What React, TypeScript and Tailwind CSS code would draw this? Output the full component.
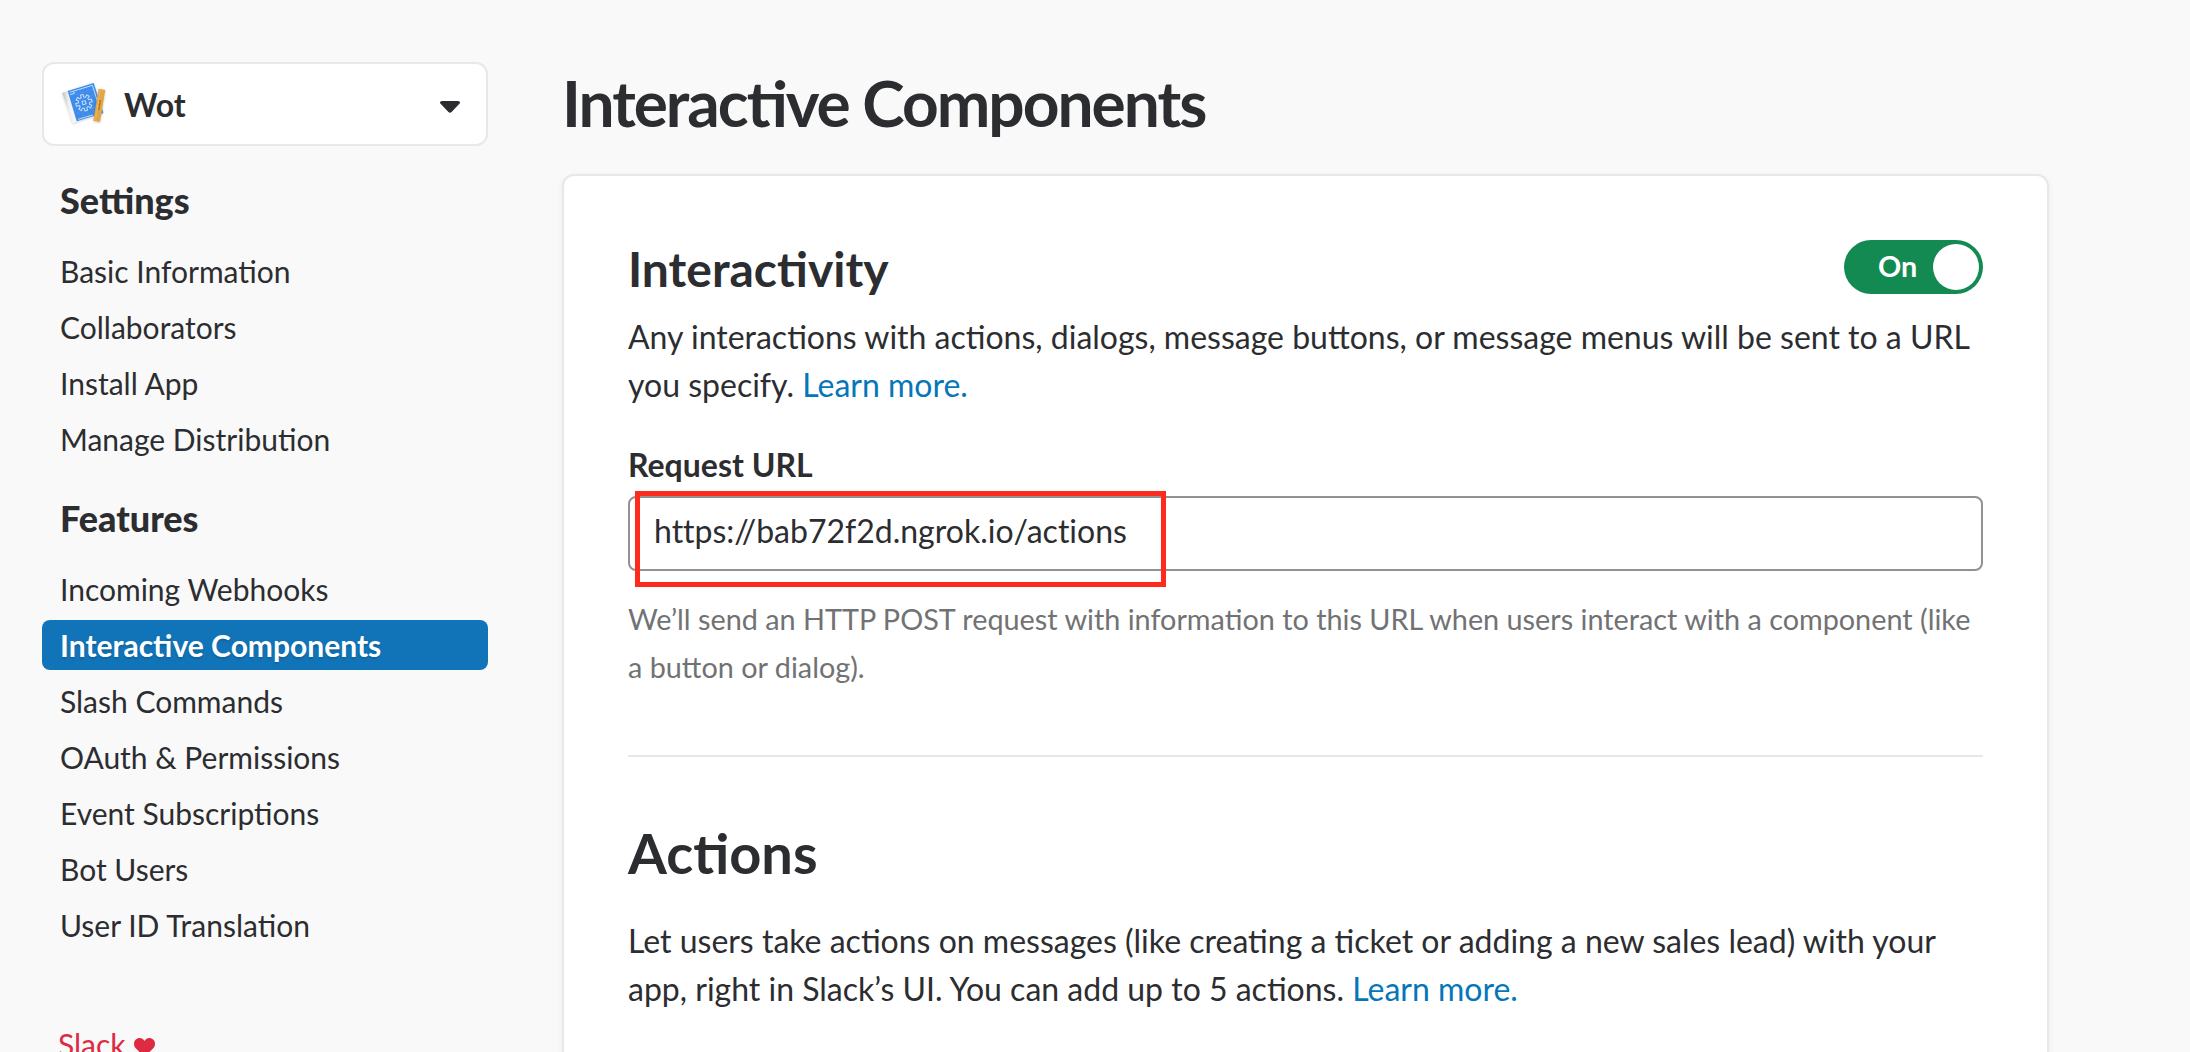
const settings = ['Basic Information', 'Collaborators', 'Install App', 'Manage Distribution'];

const features = [
  'Incoming Webhooks',
  'Interactive Components',
  'Slash Commands',
  'OAuth & Permissions',
  'Event Subscriptions',
  'Bot Users',
  'User ID Translation',
];

// Outline of an eight-toothed gear centred on the origin.
const gearPoints = Array.from({ length: 8 }, (_, i) => i * 45)
  .flatMap((a) => [
    [a - 13, 17],
    [a - 10, 25],
    [a + 10, 25],
    [a + 13, 17],
  ])
  .map(([deg, r]) => {
    const t = (deg * Math.PI) / 180;
    return `${(Math.cos(t) * r).toFixed(1)},${(Math.sin(t) * r).toFixed(1)}`;
  })
  .join(' ');

function BlueprintIcon() {
  return (
    <svg viewBox="0 0 210 210" className="h-[70px] w-[70px] shrink-0" aria-hidden="true">
      <defs>
        <linearGradient id="spine" x1="0" x2="1" y1="0.2" y2="0">
          <stop offset="0" stopColor="#b9b9b9" />
          <stop offset="0.35" stopColor="#f0f0f0" />
          <stop offset="1" stopColor="#ffffff" />
        </linearGradient>
        <filter id="soft" x="-20%" y="-20%" width="140%" height="140%">
          <feDropShadow dx="0" dy="2" stdDeviation="3" floodOpacity="0.25" />
        </filter>
      </defs>
      <g filter="url(#soft)">
        <path d="M37 72 L54 66 L84 157 L69 162 Z" fill="url(#spine)" />
        <path d="M53 66 L131 42 L160 132 L80 157 Z" fill="#3e8bea" />
      </g>
      <g fill="none" stroke="#5b9cf0" strokeWidth="1.2">
        <path d="M75 60 L102 150 M91 55 L118 145 M107 50 L134 140 M58 82 L136 58 M63 99 L141 75 M68 117 L146 93 M74 134 L152 110" />
      </g>
      <g fill="none" stroke="#cfe3fc" strokeWidth="2.8" strokeLinejoin="round">
        <path d="M59 70 L127 49 L153 130 M84 151 L128 138 M60 77 L73 73 L71 68" />
        <g transform="translate(102 101) rotate(-16)">
          <polygon points={gearPoints} />
          <rect x="-5" y="-5" width="10" height="10" />
        </g>
      </g>
      <path d="M146 59 L166 63 L150 159 L130 155 Z" fill="#e3a544" filter="url(#soft)" />
      <path d="M149 62 L153 63 L138 153 L134 152 Z" fill="#ecb254" />
      <path d="M151 93 L146 125" stroke="#85622c" strokeWidth="3.5" strokeDasharray="3 1" />
    </svg>
  );
}

function NavItem({ label, active = false }: { label: string; active?: boolean }) {
  return (
    <a
      className={
        active
          ? 'block h-[50px] rounded-lg bg-[#1174b8] px-[18px] font-bold text-white [text-shadow:0_2px_2px_rgba(0,0,0,0.15)]'
          : 'block h-[50px] px-[18px]'
      }
    >
      {label}
    </a>
  );
}

function Sidebar() {
  return (
    <aside className="w-[446px] shrink-0 text-[30px] leading-[50px]">
      <div className="mt-[62px] flex h-[84px] items-center rounded-xl border-2 border-[#e8e8e8] bg-white pr-[26px] pl-[6px]">
        <BlueprintIcon />
        <span className="ml-[4px] flex-1 pt-0.5 text-[32px] font-bold">Wot</span>
        <svg viewBox="0 0 20 12" className="mt-[6px] h-3 w-5" aria-hidden="true">
          <path d="M2 0 H18 Q20 0 20 1.5 Q20 2.2 19.4 2.8 L11.6 11 Q10 12.6 8.4 11 L0.6 2.8 Q0 2.2 0 1.5 Q0 0 2 0 Z" fill="#2c2d30" />
        </svg>
      </div>
      <h2 className="mt-[29px] px-[18px] text-[36px] font-black">Settings</h2>
      <nav className="mt-[21px] flex flex-col gap-1.5">
        {settings.map((s) => (
          <NavItem key={s} label={s} />
        ))}
      </nav>
      <h2 className="mt-[29px] px-[18px] text-[36px] font-black">Features</h2>
      <nav className="mt-[21px] flex flex-col gap-1.5">
        {features.map((f) => (
          <NavItem key={f} label={f} active={f === 'Interactive Components'} />
        ))}
      </nav>
      <div className="mt-[69px] flex px-4 text-[#dc2b42]">
        Slack
        <svg viewBox="0 0 21 19" className="mt-[19px] ml-2 h-[19px] w-[21px]" aria-hidden="true">
          <path d="M10.5 19 L2 10.6 C-0.6 8 -0.6 4 1.6 1.8 C4.4 -0.9 8.6 -0.4 10.5 3 C12.4 -0.4 16.6 -0.9 19.4 1.8 C21.6 4 21.6 8 19 10.6 Z" fill="currentColor" />
        </svg>
      </div>
    </aside>
  );
}

function Toggle() {
  return (
    <button className="flex h-[54px] w-[139px] items-center justify-between rounded-full bg-[#148a53] pr-1 pl-[34px] text-[28.8px] font-bold text-white">
      <span className="pb-0.5 leading-[48px]">On</span>
      <span className="h-[46px] w-[46px] rounded-full bg-white" />
    </button>
  );
}

export default function App() {
  return (
    <div className="flex h-screen gap-[74px] overflow-hidden bg-[#f9f9f9] pl-[42px] font-['Lato',sans-serif] text-[32px] leading-[48px] text-[#2c2d30]">
      <Sidebar />
      <main className="w-[1487px] shrink-0">
        <h1 className="mt-[67px] text-[64px] leading-[72px] font-bold tracking-[-2px] [font-feature-settings:'liga'_1]">
          Interactive Components
        </h1>
        <section className="mt-[35px] h-[1000px] rounded-xl border-2 border-[#e8e8e8] bg-white px-16 pt-16 shadow-[0_2px_6px_rgba(0,0,0,0.06)]">
          <header className="flex h-[73px] items-start justify-between">
            <h2 className="pt-px text-[48px] leading-[56px] font-bold">Interactivity</h2>
            <Toggle />
          </header>
          <p>
            Any interactions with actions, dialogs, message buttons, or message menus will be sent to a URL
            <br />
            you specify. <a className="text-[#0576b9]">Learn more.</a>
          </p>
          <h3 className="mt-8 font-bold">Request URL</h3>
          <div className="relative mt-[7px] h-[75px] rounded-lg border-2 border-[#919193] pt-[9px] pl-6">
            <span className="[font-variant-ligatures:none]">https://bab72f2d.ngrok.io/actions</span>
            <div className="absolute top-[-7px] left-[5px] h-[96px] w-[531px] border-[5px] border-[#fe2b1d]" />
          </div>
          <p className="mt-6 text-[28.8px] text-[#717274]">
            We’ll send an HTTP POST request with information to this URL when users interact with a component (like
            <br />a button or dialog).
          </p>
          <hr className="mt-16 border-t-2 border-[#e8e8e8]" />
          <h2 className="mt-16 text-[56px] leading-[64px] font-bold">Actions</h2>
          <p className="mt-8">
            Let users take actions on messages (like creating a ticket or adding a new sales lead) with your
            <br />
            app, right in Slack’s UI. You can add up to 5 actions. <a className="text-[#0576b9]">Learn more.</a>
          </p>
        </section>
      </main>
    </div>
  );
}
